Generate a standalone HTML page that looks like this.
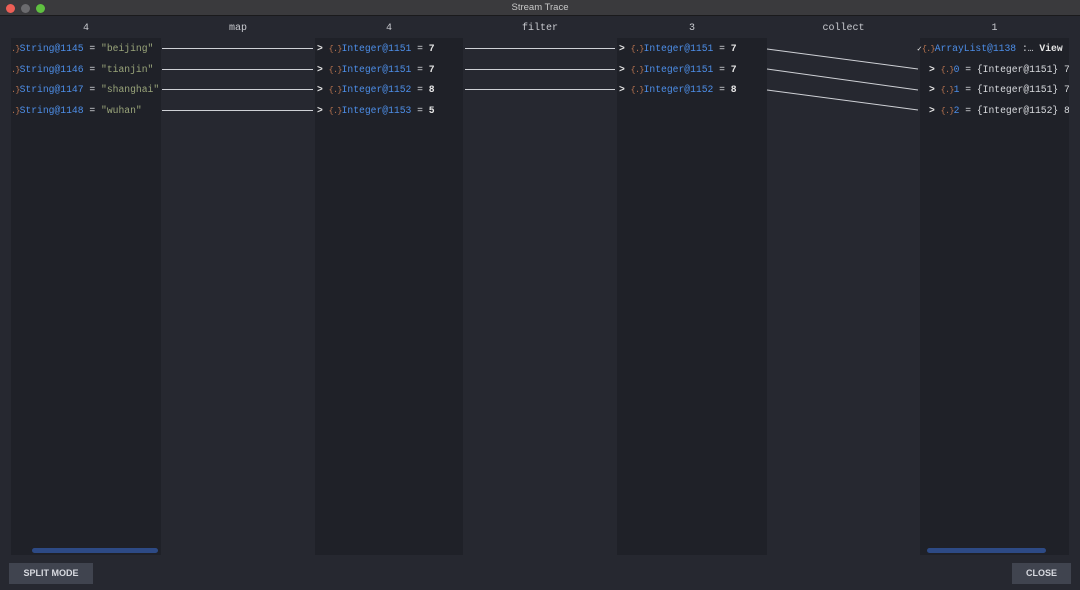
<!DOCTYPE html>
<html><head><meta charset="utf-8"><style>
*{margin:0;padding:0;box-sizing:border-box}
body{width:1080px;height:590px;background:#262830;position:relative;overflow:hidden;font-family:"Liberation Mono",monospace;font-size:9.7px;color:#d8dade}
.tb{position:absolute;left:0;top:0;width:1080px;height:16px;background:#3a3a3d;border-bottom:1px solid #1a1a1c;text-align:center;font-family:"Liberation Sans",sans-serif;font-size:9.5px;color:#c8c8c8;line-height:16px}
.dot{position:absolute;top:4px;width:9px;height:9px;border-radius:50%}
.panel{position:absolute;top:38px;height:517px;background:#1f2128}
.hd{position:absolute;top:23px;font-size:10px;color:#c9cbd0;text-align:center}
.r{position:absolute;white-space:pre;line-height:12px}
.b{color:#4d8ee8}.s{color:#9aa57a}.o{color:#b8734e;font-size:8.5px;letter-spacing:-0.8px}.w{color:#e6e6e6;font-weight:bold}
.sb{position:absolute;top:548px;height:5px;background:#2d4a85;border-radius:3px}
.btn{position:absolute;top:563px;height:21px;background:#40444f;color:#d8dae0;font-family:"Liberation Sans",sans-serif;font-weight:bold;font-size:9px;text-align:center;line-height:21px}
</style></head><body>
<div class="tb">Stream Trace<div class="dot" style="left:6px;background:#ed5f56"></div><div class="dot" style="left:21px;background:#6b6b6e"></div><div class="dot" style="left:36px;background:#5fc040"></div></div>
<div class="panel" style="left:11px;width:150px"></div>
<div class="panel" style="left:315px;width:148px"></div>
<div class="panel" style="left:617px;width:150px"></div>
<div class="panel" style="left:920px;width:149px"></div>
<div class="hd" style="left:11px;width:150px">4</div>
<div class="hd" style="left:161px;width:154px">map</div>
<div class="hd" style="left:315px;width:148px">4</div>
<div class="hd" style="left:463px;width:154px">filter</div>
<div class="hd" style="left:617px;width:150px">3</div>
<div class="hd" style="left:767px;width:153px">collect</div>
<div class="hd" style="left:920px;width:149px">1</div>
<svg style="position:absolute;left:0;top:0" width="1080" height="590">
<g stroke="#cfd1d6" stroke-width="1" fill="none">
<line x1="162" y1="48.5" x2="313" y2="48.5"/><line x1="162" y1="69.5" x2="313" y2="69.5"/><line x1="162" y1="89.5" x2="313" y2="89.5"/><line x1="162" y1="110.5" x2="313" y2="110.5"/>
<line x1="465" y1="48.5" x2="615" y2="48.5"/><line x1="465" y1="69.5" x2="615" y2="69.5"/><line x1="465" y1="89.5" x2="615" y2="89.5"/>
<line x1="767" y1="49" x2="918" y2="69"/><line x1="767" y1="69" x2="918" y2="90"/><line x1="767" y1="90" x2="918" y2="110"/>
</g></svg>
<div class="r" style="left:11px;top:43px"><span class="o">.}</span><span class="b">String@1145</span> = <span class="s">"beijing"</span></div>
<div class="r" style="left:11px;top:64px"><span class="o">.}</span><span class="b">String@1146</span> = <span class="s">"tianjin"</span></div>
<div class="r" style="left:11px;top:84px"><span class="o">.}</span><span class="b">String@1147</span> = <span class="s">"shanghai"</span></div>
<div class="r" style="left:11px;top:105px"><span class="o">.}</span><span class="b">String@1148</span> = <span class="s">"wuhan"</span></div>
<div class="r" style="left:317px;top:43px"><span class="w">&gt;</span> <span class="o">{.}</span><span class="b">Integer@1151</span> = <span class="w">7</span></div>
<div class="r" style="left:317px;top:64px"><span class="w">&gt;</span> <span class="o">{.}</span><span class="b">Integer@1151</span> = <span class="w">7</span></div>
<div class="r" style="left:317px;top:84px"><span class="w">&gt;</span> <span class="o">{.}</span><span class="b">Integer@1152</span> = <span class="w">8</span></div>
<div class="r" style="left:317px;top:105px"><span class="w">&gt;</span> <span class="o">{.}</span><span class="b">Integer@1153</span> = <span class="w">5</span></div>
<div class="r" style="left:619px;top:43px"><span class="w">&gt;</span> <span class="o">{.}</span><span class="b">Integer@1151</span> = <span class="w">7</span></div>
<div class="r" style="left:619px;top:64px"><span class="w">&gt;</span> <span class="o">{.}</span><span class="b">Integer@1151</span> = <span class="w">7</span></div>
<div class="r" style="left:619px;top:84px"><span class="w">&gt;</span> <span class="o">{.}</span><span class="b">Integer@1152</span> = <span class="w">8</span></div>
<div style="position:absolute;left:917px;top:38px;width:152px;height:90px;overflow:hidden">
<div class="r" style="left:0px;top:5px"><span class="w" style="font-size:8px">✓</span><span class="o">{.}</span><span class="b">ArrayList@1138</span> :… <span class="w">View</span></div>
<div class="r" style="left:12px;top:26px"><span class="w">&gt;</span> <span class="o">{.}</span><span class="b">0</span> = {Integer@1151} 7</div>
<div class="r" style="left:12px;top:46px"><span class="w">&gt;</span> <span class="o">{.}</span><span class="b">1</span> = {Integer@1151} 7</div>
<div class="r" style="left:12px;top:67px"><span class="w">&gt;</span> <span class="o">{.}</span><span class="b">2</span> = {Integer@1152} 8</div>
</div>
<div class="sb" style="left:32px;width:126px"></div>
<div class="sb" style="left:927px;width:119px"></div>
<div class="btn" style="left:9px;width:84px">SPLIT MODE</div>
<div class="btn" style="left:1012px;width:59px">CLOSE</div>
</body></html>
